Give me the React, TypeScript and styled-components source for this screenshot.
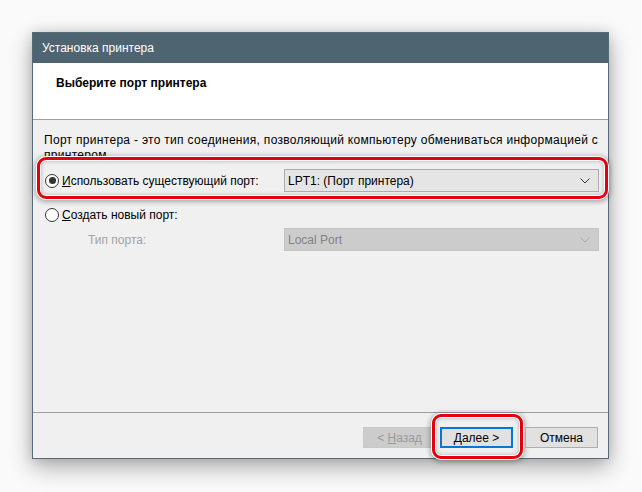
import React from 'react';
import styled, { createGlobalStyle } from 'styled-components';

const GlobalStyle = createGlobalStyle`
  html, body {
    margin: 0;
    padding: 0;
    background: #fafafa;
  }
  body {
    font-family: "Liberation Sans", Arial, sans-serif;
    font-size: 12px;
    color: #000;
  }
`;

const Page = styled.div`
  width: 642px;
  height: 492px;
  padding: 32px 0 0 32px;
  box-sizing: border-box;
`;

const Window = styled.div`
  width: 577px;
  height: 427px;
  box-sizing: border-box;
  border: 1px solid #576a77;
  display: flex;
  flex-direction: column;
  background: #f0f0f0;
  box-shadow: 0 8px 22px rgba(0, 0, 0, 0.32), 0 0 10px rgba(0, 0, 0, 0.12);
`;

const TitleBar = styled.div`
  height: 30px;
  flex-shrink: 0;
  background: #4f6471;
  color: #fff;
  display: flex;
  align-items: center;
  padding-left: 9px;
  font-size: 12px;
`;

const Header = styled.div`
  height: 57px;
  flex-shrink: 0;
  background: #fff;
  border-bottom: 1px solid #a0a0a0;
  padding: 12px 0 0 23px;
  box-sizing: border-box;
`;

const HeaderTitle = styled.div`
  font-weight: bold;
  font-size: 12px;
  line-height: 16px;
`;

const Body = styled.div`
  flex: 1;
  padding: 13px 9px 0 11px;
  display: flex;
  flex-direction: column;
`;

const Description = styled.p`
  margin: 0;
  line-height: 15px;
  letter-spacing: 0.3px;
`;

const Highlight = styled.div`
  position: relative;
  margin-top: 6px;

  &::before {
    content: '';
    position: absolute;
    top: -12px;
    bottom: -7px;
    left: -7px;
    right: -9px;
    border: 3px solid #e2000f;
    border-radius: 9px;
    background: #f0f0f0;
    box-shadow: 0 0 0 1px #fff, 0 1px 5px 2px rgba(0, 0, 0, 0.3),
      inset 0 0 0 1px #fff, inset 0 0 4px 1px rgba(0, 0, 0, 0.25);
  }
`;

const OptionRow = styled.div<{ $gap?: number }>`
  position: relative;
  display: grid;
  grid-template-columns: 240px 315px;
  align-items: center;
  margin-top: ${(p) => p.$gap ?? 0}px;
`;

const RadioLabel = styled.label`
  display: flex;
  align-items: center;
  gap: 3px;
  height: 16px;
  margin-left: 1px;
`;

const Radio = styled.span<{ $checked?: boolean }>`
  width: 12px;
  height: 12px;
  border: 1px solid #333;
  border-radius: 50%;
  background: #fff;
  display: flex;
  align-items: center;
  justify-content: center;
  flex-shrink: 0;

  &::after {
    content: '';
    width: 7px;
    height: 7px;
    border-radius: 50%;
    background: #333;
    display: ${(p) => (p.$checked ? 'block' : 'none')};
  }
`;

const SubLabel = styled.span`
  color: #a3a3a3;
  padding-left: 44px;
`;

const Select = styled.div<{ $disabled?: boolean }>`
  height: 23px;
  box-sizing: border-box;
  border: 1px solid ${(p) => (p.$disabled ? '#c4c4c4' : '#adadad')};
  background: ${(p) => (p.$disabled ? '#cccccc' : '#e5e5e5')};
  color: ${(p) => (p.$disabled ? '#838383' : '#000')};
  display: flex;
  align-items: center;
  justify-content: space-between;
  padding: 0 8px 0 3px;
`;

const Footer = styled.div`
  height: 46px;
  flex-shrink: 0;
  border-top: 1px solid #a0a0a0;
  display: flex;
  justify-content: flex-end;
  align-items: flex-start;
  padding: 14px 10px 0 0;
  box-sizing: border-box;
`;

const Button = styled.div<{ $variant?: 'default' | 'primary' | 'disabled' }>`
  position: relative;
  height: 21px;
  width: 73px;
  box-sizing: border-box;
  display: flex;
  align-items: center;
  justify-content: center;
  border: ${(p) =>
    p.$variant === 'primary'
      ? '2px solid #0078d7'
      : p.$variant === 'disabled'
      ? '1px solid #c8c8c8'
      : '1px solid #adadad'};
  background: ${(p) => (p.$variant === 'disabled' ? '#cccccc' : '#e1e1e1')};
  color: ${(p) => (p.$variant === 'disabled' ? '#9a9a9a' : '#000')};
`;

const ButtonMark = styled.div`
  position: relative;
  margin: 0 12px 0 4px;

  &::before {
    content: '';
    position: absolute;
    top: -13px;
    bottom: -11px;
    left: -8px;
    right: -10px;
    border: 3px solid #e2000f;
    border-radius: 9px;
    background: #f0f0f0;
    box-shadow: 0 0 0 1px #fff, 0 1px 5px 2px rgba(0, 0, 0, 0.3),
      inset 0 0 0 1px #fff, inset 0 0 4px 1px rgba(0, 0, 0, 0.25);
  }
`;

const Chevron = ({ color }: { color: string }) => (
  <svg width="10" height="6" viewBox="0 0 10 6">
    <polyline points="0.5,0.5 5,5 9.5,0.5" fill="none" stroke={color} strokeWidth="1" />
  </svg>
);

export default function App() {
  return (
    <>
      <GlobalStyle />
      <Page>
        <Window>
          <TitleBar>Установка принтера</TitleBar>
          <Header>
            <HeaderTitle>Выберите порт принтера</HeaderTitle>
          </Header>
          <Body>
            <Description>
              Порт принтера - это тип соединения, позволяющий компьютеру обмениваться информацией с
              <br />
              принтером.
            </Description>
            <Highlight>
              <OptionRow>
                <RadioLabel>
                  <Radio $checked />
                  <span>
                    <u>И</u>спользовать существующий порт:
                  </span>
                </RadioLabel>
                <Select>
                  <span>LPT1: (Порт принтера)</span>
                  <Chevron color="#333" />
                </Select>
              </OptionRow>
            </Highlight>
            <OptionRow $gap={15}>
              <RadioLabel>
                <Radio />
                <span>
                  <u>С</u>оздать новый порт:
                </span>
              </RadioLabel>
            </OptionRow>
            <OptionRow $gap={5}>
              <SubLabel>Тип порта:</SubLabel>
              <Select $disabled>
                <span>Local Port</span>
                <Chevron color="#a8a8a8" />
              </Select>
            </OptionRow>
          </Body>
          <Footer>
            <Button $variant="disabled">
              &lt;&nbsp;<u>Н</u>азад
            </Button>
            <ButtonMark>
              <Button $variant="primary">
                <u>Д</u>алее &gt;
              </Button>
            </ButtonMark>
            <Button>Отмена</Button>
          </Footer>
        </Window>
      </Page>
    </>
  );
}
